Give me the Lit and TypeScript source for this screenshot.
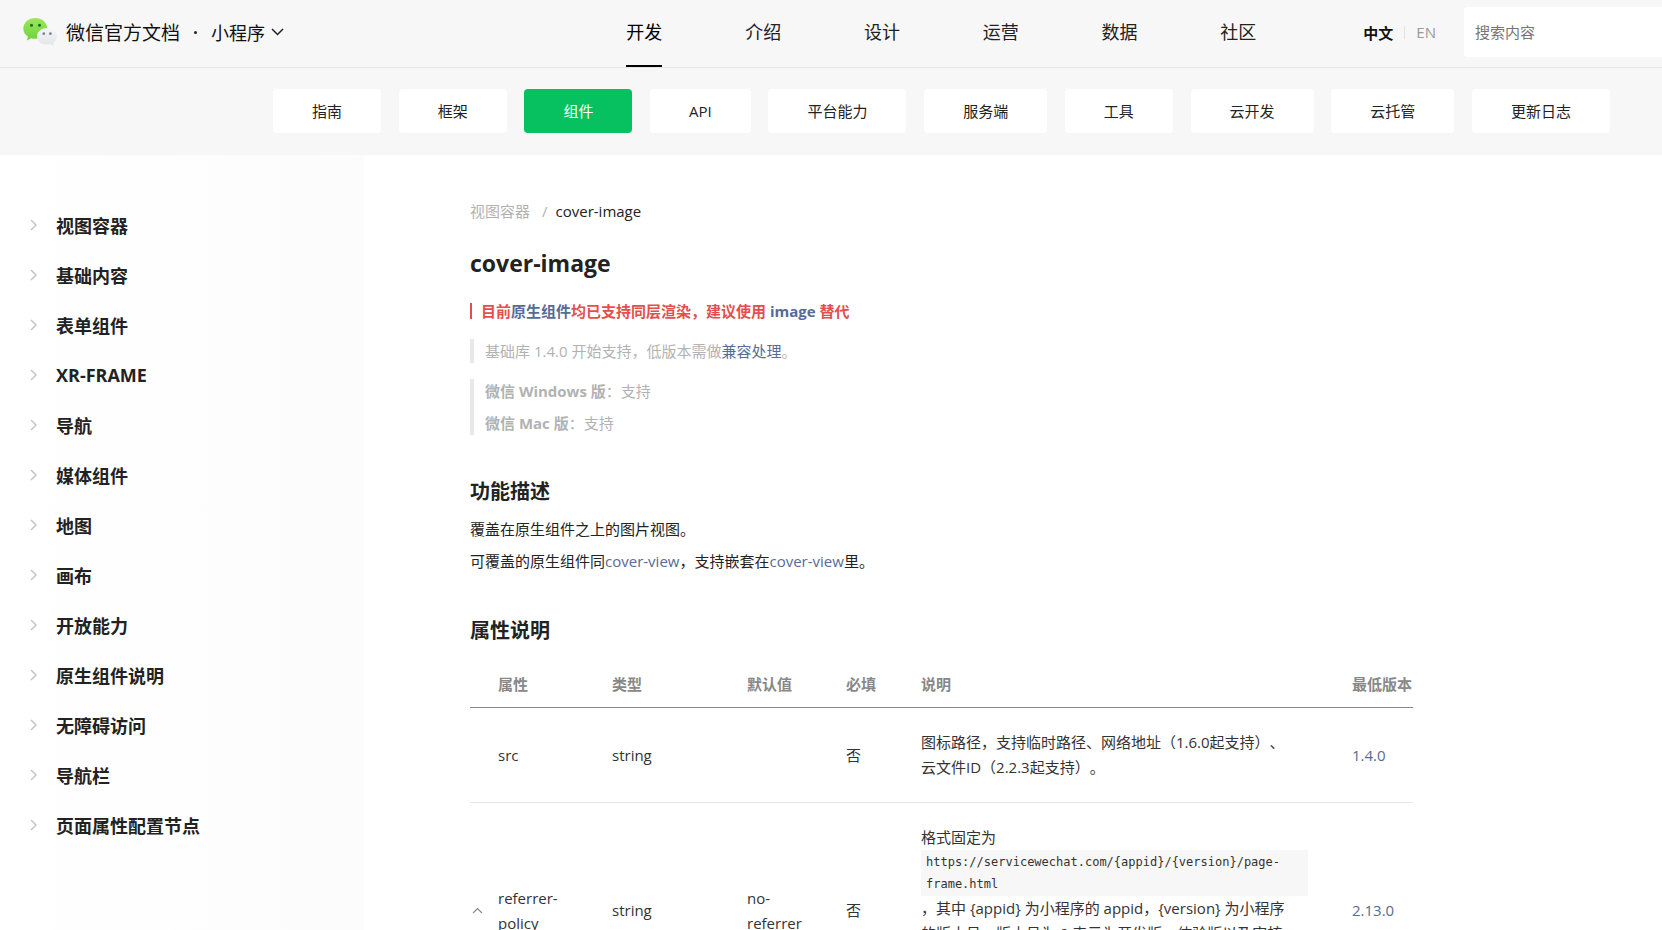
import { LitElement, html, css, nothing } from "lit";
import { customElement } from "lit/decorators.js";
import { classMap } from "lit/directives/class-map.js";

const SECTIONS = ["开发", "介绍", "设计", "运营", "数据", "社区"];
const TABS = ["指南", "框架", "组件", "API", "平台能力", "服务端", "工具", "云开发", "云托管", "更新日志"];
const TREE = [
  "视图容器", "基础内容", "表单组件", "XR-FRAME", "导航", "媒体组件", "地图",
  "画布", "开放能力", "原生组件说明", "无障碍访问", "导航栏", "页面属性配置节点",
];

@customElement("doc-header")
class DocHeader extends LitElement {
  static styles = css`
    :host { display: block; flex: none; background: #f7f7f7; }
    a { color: inherit; text-decoration: none; }
    .top { display: flex; align-items: center; height: 67px; border-bottom: 1px solid #e6e6e6; }
    .brand { display: flex; align-items: center; margin-bottom: 3px; padding-left: 23px; color: #111; white-space: nowrap; }
    .logo { width: 34px; height: 28px; margin-right: 9px; }
    .name { font-size: 19px; }
    .dot { width: 3px; height: 3px; margin: 0 14px; border-radius: 50%; background: #222; }
    .product { display: flex; align-items: center; gap: 6px; padding: 0; border: 0; background: none; color: inherit; font: inherit; font-size: 18px; }
    .sections { display: flex; justify-content: space-between; width: 630px; height: 67px; margin-left: auto; font-size: 18px; line-height: 65px; color: #222; }
    .section { box-sizing: border-box; height: 67px; }
    .section.on { border-bottom: 2px solid #000; color: #000; }
    .lang { display: flex; align-items: center; gap: 11px; margin: 0 28px 3px 107px; font-size: 15px; color: #9a9a9a; }
    .zh { color: #111; font-weight: 700; }
    .rule { width: 1px; height: 13px; background: #e2e2e2; }
    .search { box-sizing: border-box; width: 198px; height: 50px; margin: 0 0 3px; padding: 0 11px; border: 0; border-radius: 4px 0 0 4px; background: #fff; font: inherit; font-size: 15px; outline: none; }
    .search::placeholder { color: #757575; opacity: 1; }
    .tabs { display: flex; justify-content: space-between; padding: 21px 52px 22px 273px; }
    .tab { padding: 0 39px; border-radius: 4px; background: #fff; color: #222; font-size: 15px; line-height: 44px; white-space: nowrap; }
    .tab.on { background: #07c160; color: #fff; }
  `;

  render() {
    return html`
      <header class="top">
        <div class="brand">
          <svg class="logo" viewBox="0 0 34 28" aria-hidden="true">
            <defs>
              <linearGradient id="green" x1="0" y1="0" x2="0" y2="1"><stop offset="0" stop-color="#9be75c" /><stop offset="1" stop-color="#6fd23f" /></linearGradient>
              <linearGradient id="pale" x1="0" y1="0" x2="0" y2="1"><stop offset="0" stop-color="#f5f6f9" /><stop offset="1" stop-color="#e3e5ea" /></linearGradient>
            </defs>
            <path fill="url(#green)" d="M12.3 0C5.5 0 .3 4.7.3 10.6c0 3.4 1.800 6.300 4.600 8.200l-1 3.600 4.300-2.200c1.300.4 2.700.5 4.100.5 6.700 0 12-4.500 12-10.200S19 0 12.300 0z" />
            <path fill="url(#pale)" d="M24 10c-5.600 0-10 3.700-10 8.300s4.400 8.300 10 8.300c1.300 0 2.500-.2 3.600-.5l3.300 1.800-.8-2.900c2.400-1.600 3.900-4 3.900-6.700C34 13.700 29.600 10 24 10z" />
            <circle cx="8.500" cy="7.300" r="1.500" fill="#1b6a1e" /><circle cx="16.500" cy="7.300" r="1.500" fill="#1b6a1e" />
            <circle cx="20.800" cy="15.700" r="1.400" fill="#7c8590" /><circle cx="27.400" cy="15.700" r="1.400" fill="#7c8590" />
          </svg>
          <a class="name" href="#">微信官方文档</a>
          <span class="dot"></span>
          <button class="product" type="button">
            小程序
            <svg width="13" height="8" viewBox="0 0 13 8" aria-hidden="true"><path d="M1 1l5.500 5.500L12 1" fill="none" stroke="#222" stroke-width="1.500" /></svg>
          </button>
        </div>
        <nav class="sections" aria-label="主导航">
          ${SECTIONS.map((s, i) => html`<a href="#" class=${classMap({ section: true, on: i === 0 })}>${s}</a>`)}
        </nav>
        <div class="lang"><a class="zh" href="#">中文</a><span class="rule"></span><a href="#">EN</a></div>
        <input class="search" type="search" placeholder="搜索内容" aria-label="搜索内容" />
      </header>
      <nav class="tabs" aria-label="文档分类">
        ${TABS.map((t) => html`<a href="#" class=${classMap({ tab: true, on: t === "组件" })}>${t}</a>`)}
      </nav>
    `;
  }
}

@customElement("doc-sidebar")
class DocSidebar extends LitElement {
  static styles = css`
    :host { display: block; box-sizing: border-box; flex: none; width: 364px; padding-top: 45px; background: linear-gradient(to right, #fff, #fcfcfc); }
    .list { margin: 0; padding: 0; list-style: none; }
    .item { display: flex; align-items: center; gap: 19px; height: 50px; padding-left: 30px; color: #222; font-size: 18px; font-weight: 700; text-decoration: none; }
  `;

  render() {
    return html`<nav aria-label="组件目录"><ul class="list">
      ${TREE.map((t) => html`<li><a class="item" href="#">
        <svg width="7" height="12" viewBox="0 0 7 12" aria-hidden="true"><path d="M1 1l5 5-5 5" fill="none" stroke="#c4c4c4" stroke-width="1.500" /></svg>${t}</a></li>`)}
    </ul></nav>`;
  }
}

@customElement("doc-article")
class DocArticle extends LitElement {
  static styles = css`
    :host { display: block; flex: 1; min-width: 0; overflow-y: auto; scrollbar-width: none; padding: 40px 249px 40px 106px; box-sizing: border-box; font-size: 15px; line-height: 32px; color: #222; }
    a { color: #576b95; text-decoration: none; }
    .crumbs { display: flex; gap: 8px; color: #222; }
    .crumbs .parent, .crumbs .slash { color: #b2b2b2; }
    .crumbs .slash { margin-left: 4px; }
    h1 { margin: 20px 0 24px; font-size: 23px; line-height: 32px; }
    h2 { margin: 0; font-size: 20px; line-height: 32px; }
    p { margin: 0; }
    .warn { margin: 0 0 20px; padding-left: 9px; border-left: 2px solid #e64d4d; color: #e64d4d; font-weight: 700; line-height: 16px; }
    .note { margin: 16px 0 0; padding-left: 11px; border-left: 4px solid #e8e8e8; color: #b2b2b2; line-height: 24px; }
    .stack { display: grid; gap: 8px; }
    .about { margin-top: 41px; }
    .text { margin: 5px 0 38px; }
    table { width: 100%; margin-top: 16px; border-collapse: collapse; table-layout: fixed; line-height: 25px; color: #333; }
    th { padding: 9px 0 10px; border-bottom: 1px solid #888; color: #888; text-align: left; white-space: nowrap; }
    td { padding: 22px 0; border-bottom: 1px solid #e5e5e5; }
    .w-fold { width: 28px; }
    .w-name { width: 114px; }
    .w-type { width: 135px; }
    .w-default { width: 99px; }
    .w-need { width: 75px; }
    .w-version { width: 61px; }
    td.wrap { padding-right: 36px; }
    td.desc { padding-right: 56px; text-spacing-trim: space-all; }
    .fold { display: flex; padding: 2px; border: 0; background: none; }
    code { display: block; margin-right: -12px; padding: 1px 5px; background: #f7f7f7; font-family: "DejaVu Sans Mono", "Noto Sans CJK SC", monospace; font-size: 12px; line-height: 22px; overflow-wrap: anywhere; }
  `;

  render() {
    return html`
      <nav class="crumbs" aria-label="面包屑"><a class="parent" href="#">视图容器</a><span class="slash">/</span><span>cover-image</span></nav>
      <h1>cover-image</h1>
      <p class="warn">目前<a href="#">原生组件</a>均已支持同层渲染，建议使用 <a href="#">image</a> 替代</p>
      <blockquote class="note">基础库 1.4.0 开始支持，低版本需做<a href="#">兼容处理</a>。</blockquote>
      <blockquote class="note stack">
        <p><strong>微信 Windows 版</strong>：支持</p>
        <p><strong>微信 Mac 版</strong>：支持</p>
      </blockquote>
      <h2 class="about">功能描述</h2>
      <div class="text">
        <p>覆盖在原生组件之上的图片视图。</p>
        <p>可覆盖的原生组件同<a href="#">cover-view</a>，支持嵌套在<a href="#">cover-view</a>里。</p>
      </div>
      <h2>属性说明</h2>
      <table>
        <colgroup><col class="w-fold" /><col class="w-name" /><col class="w-type" /><col class="w-default" /><col class="w-need" /><col /><col class="w-version" /></colgroup>
        <thead><tr><th></th><th>属性</th><th>类型</th><th>默认值</th><th>必填</th><th>说明</th><th>最低版本</th></tr></thead>
        <tbody>
          <tr>
            <td></td><td>src</td><td>string</td><td>${nothing}</td><td>否</td>
            <td class="desc">图标路径，支持临时路径、网络地址（1.6.0起支持）、<br />云文件ID（2.2.3起支持）。</td>
            <td><a href="#">1.4.0</a></td>
          </tr>
          <tr>
            <td><button class="fold" type="button" aria-label="收起"><svg width="11" height="7" viewBox="0 0 11 7"><path d="M1 6l4.500-4.500L10 6" fill="none" stroke="#888" stroke-width="1.200" /></svg></button></td>
            <td class="wrap">referrer-policy</td><td>string</td><td class="wrap">no-referrer</td><td>否</td>
            <td class="desc">格式固定为 <code>https://servicewechat.com/{appid}/{version}/page-frame.html</code>，其中 {appid} 为小程序的 appid，{version} 为小程序的版本号，版本号为 0 表示为开发版、体验版以及审核版本，版本号为 devtools 表示为开发者工具，其余为正式版本；</td>
            <td><a href="#">2.13.0</a></td>
          </tr>
        </tbody>
      </table>
    `;
  }
}

@customElement("app-root")
class AppRoot extends LitElement {
  static styles = css`
    :host { display: flex; flex-direction: column; height: 100vh; overflow: hidden; background: #fff; font-family: "Open Sans", "Noto Sans CJK SC", sans-serif; }
    .body { display: flex; flex: 1; min-height: 0; }
  `;

  render() {
    return html`<doc-header></doc-header><div class="body"><doc-sidebar></doc-sidebar><doc-article></doc-article></div>`;
  }
}
